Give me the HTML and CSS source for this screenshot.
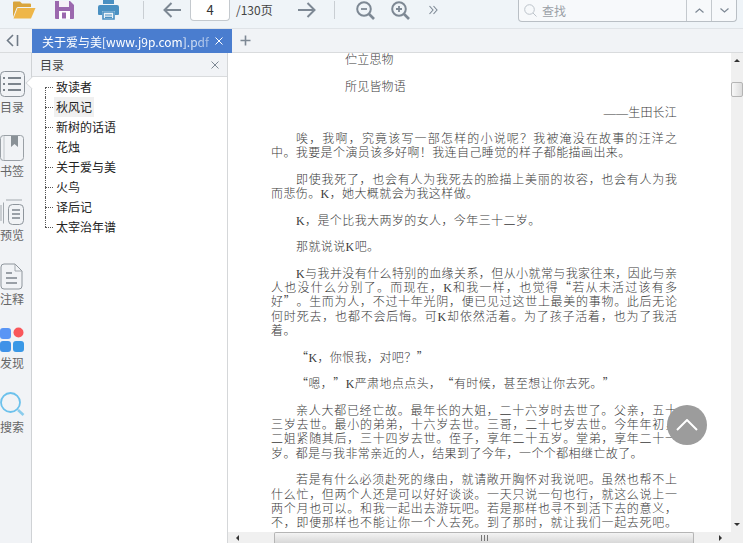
FILE: index.html
```html
<!DOCTYPE html>
<html lang="zh-CN">
<head>
<meta charset="utf-8">
<title>关于爱与美</title>
<link rel="stylesheet" href="styles.css">
</head>
<body>
<div class="app">
  <header class="toolbar">
    <svg class="tool t-open" width="24" height="20" viewBox="0 0 24 20"><path d="M1 5V2.500q0-1 1-1h6l2 2h8q1 0 1 1V7H6q-1 0-1.500 1L1 17z" fill="#d9a53d"/><path d="M5.500 8H23.500L19 18.500H1.500z" fill="#eeb649"/></svg>
    <svg class="tool t-save" width="19" height="20" viewBox="0 0 19 20"><path d="M0 1h15l4 4v13q0 1-1 1H1q-1 0-1-1z" fill="#9b68ae"/><rect x="4" y="1" width="10" height="6" fill="#fff" opacity=".9"/><rect x="4" y="11" width="11" height="8" fill="#fff"/><rect x="7" y="12.500" width="4" height="6" fill="#9b68ae"/></svg>
    <svg class="tool t-print" width="21" height="20" viewBox="0 0 21 20"><rect x="5" y="0" width="11" height="4" fill="#4a90c2"/><path d="M2 5h17q2 0 2 2v7q0 1-1 1h-3v-4H4v4H1q-1 0-1-1V7q0-2 2-2z" fill="#4a90c2"/><path d="M5 12h11v7H5z" fill="none" stroke="#4a90c2" stroke-width="1.600"/><path d="M7 15h7M7 17.300h7" stroke="#4a90c2" stroke-width="1.200"/></svg>
    <span class="sep s1"></span>
    <svg class="tool t-back" width="18" height="16" viewBox="0 0 18 16"><path d="M8.500 1L1.500 8l7 7M1.500 8H18" fill="none" stroke="#7d8894" stroke-width="2"/></svg>
    <div class="page-input">4</div>
    <span class="page-total">/130页</span>
    <svg class="tool t-next" width="18" height="16" viewBox="0 0 18 16"><path d="M9.500 1l7 7-7 7M16.500 8H0" fill="none" stroke="#7d8894" stroke-width="2"/></svg>
    <span class="sep s2"></span>
    <svg class="tool t-zout" width="19" height="19" viewBox="0 0 19 19"><circle cx="8" cy="8" r="6.800" fill="none" stroke="#7d8894" stroke-width="2"/><path d="M5 8h6" stroke="#7d8894" stroke-width="1.800"/><path d="M13 13l5 5" stroke="#7d8894" stroke-width="2.600"/></svg>
    <svg class="tool t-zin" width="19" height="19" viewBox="0 0 19 19"><circle cx="8" cy="8" r="6.800" fill="none" stroke="#7d8894" stroke-width="2"/><path d="M5 8h6M8 5v6" stroke="#7d8894" stroke-width="1.800"/><path d="M13 13l5 5" stroke="#7d8894" stroke-width="2.600"/></svg>
    <svg class="tool t-more" width="9" height="10" viewBox="0 0 9 10"><path d="M.5 1l3.500 4-3.500 4M4.500 1l3.500 4-3.500 4" fill="none" stroke="#7d8894" stroke-width="1.100"/></svg>
    <div class="search">
      <div class="search-field">
        <svg width="13" height="13" viewBox="0 0 13 13"><circle cx="5.500" cy="5.500" r="4.800" fill="none" stroke="#bcc3ca" stroke-width="1"/><path d="M9 9l3.500 3.500" stroke="#bcc3ca" stroke-width="1"/></svg>
        <span>查找</span>
      </div>
      <div class="search-btn"><svg width="9" height="5" viewBox="0 0 9 5"><path d="M.5 4.500L4.500 1l4 3.500" fill="none" stroke="#7d8894" stroke-width="1.200"/></svg></div>
      <div class="search-btn"><svg width="9" height="5" viewBox="0 0 9 5"><path d="M.5 .5L4.500 4l4-3.500" fill="none" stroke="#7d8894" stroke-width="1.200"/></svg></div>
    </div>
  </header>

  <nav class="tabbar">
    <div class="collapse"><svg width="13" height="13" viewBox="0 0 13 13"><path d="M7 1L1.500 6.500 7 12" fill="none" stroke="#6f7a86" stroke-width="1.600"/><path d="M11.500 1v11" stroke="#6f7a86" stroke-width="1.600"/></svg></div>
    <div class="tab">
      <span class="tab-title">关于爱与美[www.j9p.com].pdf</span>
      <svg width="8" height="8" viewBox="0 0 8 8"><path d="M.5 .5l7 7M7.500 .5l-7 7" stroke="#fff" stroke-width="1"/></svg>
    </div>
    <div class="tab-add"><svg width="11" height="11" viewBox="0 0 11 11"><path d="M5.500 .5v10M.5 5.500h10" stroke="#7d8894" stroke-width="1.600"/></svg></div>
  </nav>

  <div class="main">
    <aside class="rail">
      <div class="rail-item">
        <svg width="26" height="27" viewBox="0 0 26 27"><rect x=".5" y=".5" width="24" height="25" rx="4" fill="none" stroke="#8e959c" stroke-width="1"/><path d="M3 7h2M3 13h2M3 19h2M8 7h13M8 13h13M8 19h13" stroke="#7d858d" stroke-width="1.800"/></svg>
        <span>目录</span>
      </div>
      <div class="rail-item">
        <svg width="26" height="27" viewBox="0 0 26 27"><rect x=".5" y=".5" width="23" height="25" rx="3" fill="none" stroke="#9aa0a6" stroke-width="1"/><path d="M4 1v24" stroke="#c0c5ca" stroke-width="1"/><path d="M11 1h7v11l-3.500-3-3.500 3z" fill="#8a9197"/></svg>
        <span>书签</span>
      </div>
      <div class="rail-item">
        <svg width="26" height="27" viewBox="0 0 26 27"><path d="M1 6v16M3.500 3.500v21M6 1h16" fill="none" stroke="#a3a9af" stroke-width="1"/><rect x="8.500" y="5.500" width="15" height="20" rx="4" fill="none" stroke="#8e959c" stroke-width="1"/><path d="M12 11h8M12 15h8M12 19h8" stroke="#7d858d" stroke-width="1.500"/></svg>
        <span>预览</span>
      </div>
      <div class="rail-item">
        <svg width="26" height="27" viewBox="0 0 26 27"><path d="M4 1h11l7 7v15q0 3-3 3H4q-3 0-3-3V4q0-3 3-3z" fill="none" stroke="#8e959c" stroke-width="1"/><path d="M15 1v7h7" fill="none" stroke="#a3a9af" stroke-width="1"/><path d="M6 10h6M6 15h11M6 20h11" stroke="#7d858d" stroke-width="1.500"/></svg>
        <span>注释</span>
      </div>
      <div class="rail-item">
        <svg width="25" height="27" viewBox="0 0 25 27"><rect x="0" y="1" width="11" height="11" rx="3" fill="#5a95f5"/><circle cx="18.500" cy="5.500" r="5" fill="#f9565a"/><rect x="0" y="14" width="11" height="11" rx="3" fill="#3f92e8"/><rect x="13" y="14" width="11" height="11" rx="3" fill="#3a98e6"/></svg>
        <span>发现</span>
      </div>
      <div class="rail-item">
        <svg width="25" height="27" viewBox="0 0 25 27"><circle cx="10.500" cy="11.500" r="9.500" fill="none" stroke="#6cc1ec" stroke-width="1.800"/><path d="M18 19l5.500 5" stroke="#8accec" stroke-width="2.600"/></svg>
        <span>搜索</span>
      </div>
    </aside>

    <section class="outline">
      <span class="notch"></span>
      <div class="outline-head">
        <span>目录</span>
        <svg width="8" height="8" viewBox="0 0 8 8"><path d="M.5 .5l7 7M7.500 .5l-7 7" stroke="#7d8894" stroke-width="1"/></svg>
      </div>
      <ul class="tree">
        <li><span>致读者</span></li>
        <li class="active"><span>秋风记</span></li>
        <li><span>新树的话语</span></li>
        <li><span>花烛</span></li>
        <li><span>关于爱与美</span></li>
        <li><span>火鸟</span></li>
        <li><span>译后记</span></li>
        <li class="end"><span>太宰治年谱</span></li>
      </ul>
    </section>

    <section class="reader">
      <div class="reader-top">
        <div class="viewport">
          <article class="doc">
            <p class="verse">伫立思物</p>
            <p class="verse">所见皆物语</p>
            <p class="sign">——生田长江</p>
            <p><span class="ln in">唉，我啊，究竟该写一部怎样的小说呢？我被淹没在故事的汪洋之</span><span class="end-ln">中。我要是个演员该多好啊！我连自己睡觉的样子都能描画出来。</span></p>
            <p><span class="ln in">即使我死了，也会有人为我死去的脸描上美丽的妆容，也会有人为我</span><span class="end-ln">而悲伤。K，她大概就会为我这样做。</span></p>
            <p><span class="end-ln in">K，是个比我大两岁的女人，今年三十二岁。</span></p>
            <p><span class="end-ln in">那就说说K吧。</span></p>
            <p><span class="ln in">K与我并没有什么特别的血缘关系，但从小就常与我家往来，因此与亲</span><span class="ln">人也没什么分别了。而现在，K和我一样，也觉得<b class="q">“</b>若从未活过该有多</span><span class="ln">好<b class="q">”</b>。生而为人，不过十年光阴，便已见过这世上最美的事物。此后无论</span><span class="ln">何时死去，也都不会后悔。可K却依然活着。为了孩子活着，也为了我活</span><span class="end-ln">着。</span></p>
            <p><span class="end-ln in"><b class="q">“</b>K，你恨我，对吧？<b class="q">”</b></span></p>
            <p><span class="end-ln in"><b class="q">“</b>嗯，<b class="q">”</b>K严肃地点点头，<b class="q">“</b>有时候，甚至想让你去死。<b class="q">”</b></span></p>
            <p><span class="ln in">亲人大都已经亡故。最年长的大姐，二十六岁时去世了。父亲，五十</span><span class="ln">三岁去世。最小的弟弟，十六岁去世。三哥，二十七岁去世。今年年初，</span><span class="ln">二姐紧随其后，三十四岁去世。侄子，享年二十五岁。堂弟，享年二十一</span><span class="end-ln">岁。都是与我非常亲近的人，结果到了今年，一个个都相继亡故了。</span></p>
            <p><span class="ln in">若是有什么必须赴死的缘由，就请敞开胸怀对我说吧。虽然也帮不上</span><span class="ln">什么忙，但两个人还是可以好好谈谈。一天只说一句也行，就这么说上一</span><span class="ln">两个月也可以。和我一起出去游玩吧。若是那样也寻不到活下去的意义，</span><span class="ln">不，即便那样也不能让你一个人去死。到了那时，就让我们一起去死吧。</span></p>
          </article>
          <button class="to-top" type="button"><svg width="22" height="12" viewBox="0 0 22 12"><path d="M1 11L11 1l10 10" fill="none" stroke="#fff" stroke-width="2"/></svg></button>
        </div>
        <div class="vscroll">
          <span class="arrow-up"></span>
          <span class="vthumb"></span>
          <span class="arrow-down"></span>
        </div>
      </div>
      <div class="hscroll">
        <span class="arrow-left"></span>
        <span class="hthumb"><i></i></span>
        <span class="arrow-right"></span>
      </div>
    </section>
  </div>
</div>
</body>
</html>
```
FILE: styles.css
```css
* { box-sizing: border-box; }
html, body { margin: 0; height: 100%; overflow: hidden; }
body { font-family: "Noto Sans CJK SC", "Liberation Sans", sans-serif; background: #fff; }
.app { width: 743px; height: 543px; display: flex; flex-direction: column; overflow: hidden; }

.toolbar { height: 29px; flex: none; display: flex; align-items: flex-start; background: #eff4f8; border-bottom: 1px solid #dfe3e7; }
.tool { flex: none; display: block; }
.t-open { margin-left: 12px; }
.t-save { margin-left: 19px; }
.t-print { margin-left: 24px; }
.t-back { margin: 2px 0 0 19px; }
.t-next { margin: 2px 0 0 24px; }
.t-zout { margin: 1px 0 0 21px; }
.t-zin { margin: 1px 0 0 16px; }
.t-more { margin: 5px 0 0 19px; }
.sep { flex: none; width: 1px; height: 18px; margin-top: 1px; background: #c9ced3; }
.s1 { margin-left: 24px; }
.s2 { margin-left: 18px; }
.page-input { flex: none; width: 40px; height: 21px; margin-left: 9px; border: 1px solid #c4c9ce; border-top: 0; border-radius: 0 0 4px 4px; background: #fff; color: #333; font-size: 13px; line-height: 19px; text-align: center; }
.page-total { flex: none; width: 38px; margin-left: 6px; color: #444; font-size: 12px; line-height: 20px; white-space: nowrap; }
.search { flex: none; width: 219px; height: 22px; margin-left: 80px; display: flex; border: 1px solid #b9bfc5; border-top: 0; border-radius: 0 0 4px 4px; background: #f7f9fb; }
.search-field { flex: 1; display: flex; align-items: center; gap: 5px; padding-left: 5px; color: #9aa0a6; font-size: 12px; }
.search-btn { flex: none; width: 25px; display: flex; align-items: center; justify-content: center; border-left: 1px solid #c4c9ce; }

.tabbar { height: 24px; flex: none; display: flex; background: #f1f3f6; border-bottom: 1px solid #d9dbdd; }
.collapse { flex: none; width: 32px; display: flex; align-items: center; padding-left: 6px; }
.tab { flex: none; width: 200px; height: 24px; display: flex; align-items: center; gap: 6px; padding: 0 9px 0 10px; background: #4a7dcf; color: #fff; font-size: 12px; }
.tab-title { flex: 1; min-width: 0; white-space: nowrap; -webkit-mask-image: linear-gradient(90deg, #000 82%, rgba(0,0,0,.45) 100%); mask-image: linear-gradient(90deg, #000 82%, rgba(0,0,0,.45) 100%); }
.tab-add { flex: none; width: 26px; display: flex; align-items: center; justify-content: center; }

.main { flex: 1; min-height: 0; display: flex; }
.rail { flex: none; width: 32px; padding-top: 18px; background: #f1f3f6; border-right: 1px solid #cfd2d5; display: flex; flex-direction: column; color: #666; font-size: 12px; }
.rail-item { flex: none; height: 64px; display: flex; flex-direction: column; align-items: flex-start; }
.rail-item svg { display: block; }
.rail-item span { display: block; line-height: 17px; white-space: nowrap; }

.outline { flex: none; width: 196px; position: relative; background: #fff; border-right: 1px solid #d5d7d9; }
.notch { position: absolute; left: -6px; top: 24px; width: 12px; height: 12px; background: #fff; border-left: 1px solid #cfd2d5; border-bottom: 1px solid #cfd2d5; transform: rotate(45deg) scale(.75); }
.outline-head { height: 24px; display: flex; align-items: center; justify-content: space-between; padding: 0 8px 0 8px; background: #f1f3f6; border-bottom: 1px solid #d9dbdd; color: #444; font-size: 12px; }
.tree { list-style: none; margin: 0; padding: 0; color: #222; font-size: 12px; position: relative; }
.tree li { height: 20px; padding-left: 22px; position: relative; line-height: 20px; }
.tree li span { display: inline-block; padding: 0 2px; height: 20px; }
.tree li.active span { background: #f0f0f0; }
.tree li::before { content: ""; position: absolute; left: 13px; top: 10px; width: 8px; border-top: 1px dotted #555; }
.tree li::after { content: ""; position: absolute; left: 13px; top: 0; height: 20px; border-left: 1px dotted #555; }
.tree li:first-child::after { top: 10px; height: 10px; }
.tree li.end::after { height: 10px; }

.reader { flex: 1; min-width: 0; display: flex; flex-direction: column; background: #fff; }
.reader-top { flex: 1; min-height: 0; display: flex; }
.viewport { flex: 1; min-width: 0; position: relative; overflow: hidden; }
.doc { margin: 0 0 0 43px; width: 406px; color: #3a3a3a; font-family: "Liberation Serif", "Noto Sans CJK SC", serif; font-size: 12px; font-weight: 300; line-height: 14.300px; text-spacing-trim: space-all; }
.doc p { margin: 0 0 12.300px; }
.doc .verse { padding-left: 74px; letter-spacing: .2px; }
.doc .sign { margin: 1px 0 11.300px; text-align: right; letter-spacing: .2px; }
.q { font-family: "Noto Sans CJK SC", sans-serif; font-weight: 300; line-height: 0; }
.ln { display: block; text-align: justify; text-align-last: justify; white-space: nowrap; }
.end-ln { display: block; letter-spacing: .4px; white-space: nowrap; }
.in { padding-left: 25px; }
.to-top { position: absolute; left: 439px; top: 352px; width: 40px; height: 40px; padding: 0; border: 0; border-radius: 50%; background: #9c9c9c; display: flex; align-items: center; justify-content: center; }

.vscroll { flex: none; width: 12px; background: #f0f0f0; display: flex; flex-direction: column; align-items: center; position: relative; }
.arrow-up { margin-top: 6px; width: 0; height: 0; border: 3px solid transparent; border-top: 0; border-bottom: 3px solid #333; }
.vthumb { margin-top: 20px; width: 12px; height: 15px; border: 1px solid #b5b5b5; border-radius: 2px; background: linear-gradient(90deg, #f8f8f8, #dcdcdc); }
.arrow-down { margin-top: auto; margin-bottom: 6px; width: 0; height: 0; border: 3px solid transparent; border-bottom: 0; border-top: 3px solid #333; }
.hscroll { height: 11px; flex: none; background: #f0f0f0; display: flex; align-items: flex-start; }
.arrow-left { margin: 3px 0 0 8px; width: 0; height: 0; border: 3px solid transparent; border-left: 0; border-right: 3px solid #333; }
.hthumb { margin-left: 35px; width: 420px; height: 11px; border: 1px solid #b5b5b5; border-bottom: 0; border-radius: 2px 2px 0 0; background: linear-gradient(180deg, #f4f4f4, #d8d8d8); display: flex; justify-content: center; }
.hthumb i { display: block; width: 7px; height: 6px; margin-top: 2px; background: repeating-linear-gradient(90deg, #777 0 1px, transparent 1px 3px); }
.arrow-right { margin: 3px 0 0 25px; width: 0; height: 0; border: 3px solid transparent; border-right: 0; border-left: 3px solid #333; }
```
